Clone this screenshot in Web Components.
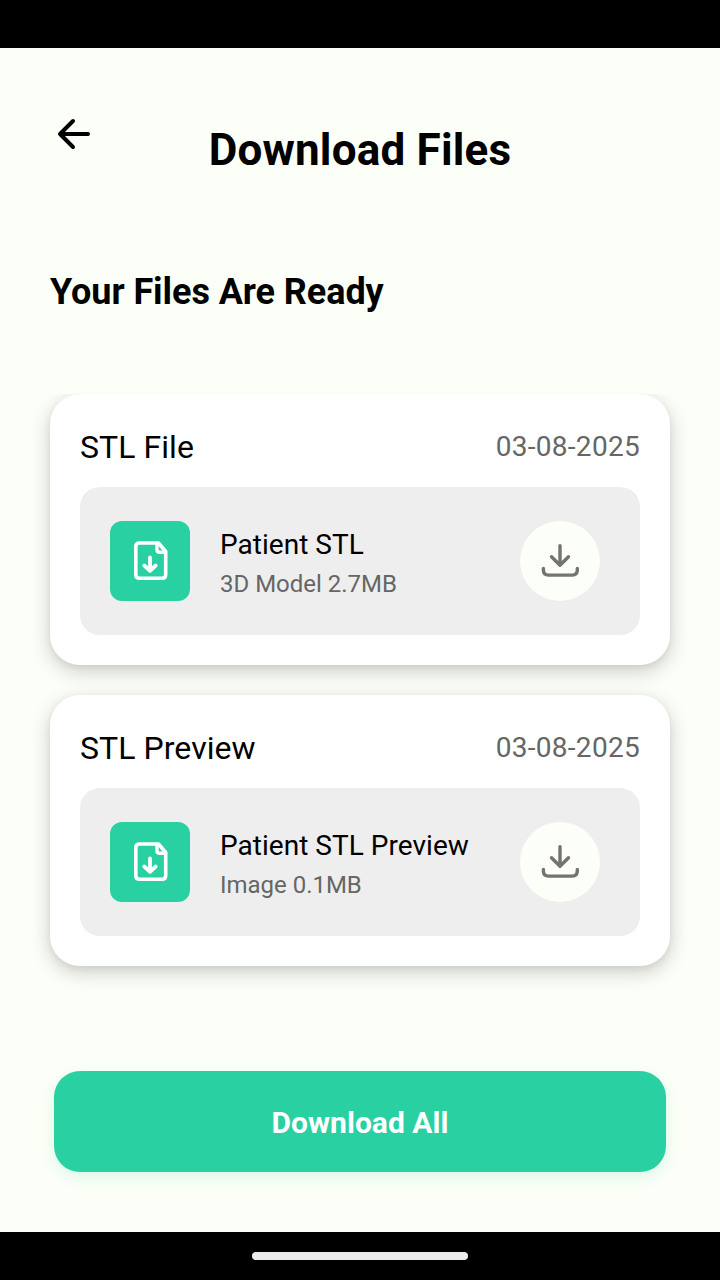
<!DOCTYPE html>
<html lang="en">
<head>
<meta charset="utf-8">
<title>Download Files</title>
<style>
html,body{margin:0;height:100%;background:#fcfff7;overflow:hidden}
body{font-family:Roboto,"Liberation Sans",sans-serif;color:#000}
</style>
</head>
<body>
<download-screen></download-screen>
<script>
const define = (name, html) => customElements.define(name, class extends HTMLElement {
  constructor() {
    super();
    const t = document.createElement('template');
    t.innerHTML = html;
    this.attachShadow({mode: 'open'}).append(t.content.cloneNode(true));
  }
});

define('file-badge', `
<style>
:host{display:flex;width:80px;height:80px;border-radius:12px;background:#29d0a2;flex:none}
svg{display:block;width:80px;height:80px}
</style>
<svg viewBox="0 0 80 80" fill="none" stroke="#fff" stroke-width="3.6" stroke-linecap="round" stroke-linejoin="round">
<path d="M48.500 22H29.500Q25.800 22 25.800 25.700V53.500Q25.800 57.200 29.500 57.200H52Q55.700 57.200 55.700 53.500V30.500Z"/>
<path d="M47 22.500V28.700Q47 31.300 49.600 31.300H55.300" stroke-width="3.400"/>
<path d="M40 36.500V49M34.300 44.500L40 49.800L45.700 44.500" stroke-width="3.800"/>
</svg>`);

define('download-button', `
<style>
:host{display:flex;width:80px;height:80px;border-radius:50%;background:#fcfff7;flex:none}
svg{display:block;width:80px;height:80px}
</style>
<svg viewBox="0 0 80 80" fill="none" stroke="#737373" stroke-width="3.4" stroke-linecap="round" stroke-linejoin="round">
<path d="M40 24.800V44M31.500 35.800L40 44.300L48.500 35.800"/>
<path d="M23.400 47.500V49Q23.400 54.100 28.500 54.100H52.200Q57.300 54.100 57.300 49V47.500"/>
</svg>`);

define('file-card', `
<style>
:host{display:block;box-sizing:border-box;height:271px;padding:30px;border-radius:30px;background:#fff;box-shadow:0 6px 20px rgba(0,0,0,.2),0 2px 6px rgba(0,0,0,.05)}
header{display:flex;justify-content:space-between;align-items:center;height:46px;margin-bottom:17px}
.heading{font-size:32px;line-height:46px;letter-spacing:.06px}
.date{font-size:28px;line-height:44px;color:#666;letter-spacing:.3px}
.row{box-sizing:border-box;display:flex;align-items:center;height:148px;padding:0 40px 0 30px;border-radius:20px;background:#eee}
.info{flex:1;margin-left:30px;padding-top:6px;display:flex;flex-direction:column;white-space:nowrap}
.name{font-size:28px;line-height:40px;letter-spacing:.03px}
.meta{font-size:24px;line-height:38px;color:#666;letter-spacing:-.02px}
</style>
<header><div class="heading"><slot name="heading"></slot></div><div class="date"><slot name="date"></slot></div></header>
<div class="row"><file-badge></file-badge>
<div class="info"><div class="name"><slot name="name"></slot></div><div class="meta"><slot name="meta"></slot></div></div>
<download-button></download-button></div>`);

define('primary-button', `
<style>
:host{display:flex;align-items:center;justify-content:center;box-sizing:border-box;height:101px;padding-top:2px;border-radius:26px;background:#29d0a2;color:#fff;font-size:30px;font-weight:700;letter-spacing:.03px;box-shadow:0 6px 16px rgba(41,208,162,.15)}
</style><span><slot></slot></span>`);

define('screen-header', `
<style>
:host{display:grid;grid-template-columns:70px 1fr 70px;height:60px;padding:0 40px}
svg{display:block;width:70px;height:60px;overflow:visible}
h1{margin:0;font-size:44px;line-height:60px;font-weight:700;text-align:center;white-space:nowrap;letter-spacing:.2px}
</style>
<svg viewBox="0 0 70 60" fill="none" stroke="#000" stroke-width="4" stroke-linecap="round" stroke-linejoin="round"><path d="M48 14H20M33 1L20 14L33 27"/></svg>
<h1><slot></slot></h1>`);

define('download-screen', `
<style>
:host{display:flex;flex-direction:column;width:720px;height:1280px;background:#fcfff7}
.status{height:48px;background:#000;flex:none}
screen-header{margin-top:72px;flex:none}
h2{margin:88px 50px 0;font-size:36px;line-height:48px;font-weight:700;letter-spacing:-.07px}
.list{margin-top:78px;height:647px;padding:0 50px;overflow:hidden;display:flex;flex-direction:column;gap:30px;flex:none}
primary-button{margin:30px 54px 60px;flex:none}
.nav{height:48px;background:#000;display:flex;align-items:center;justify-content:center;flex:none}
.nav i{width:216px;height:8px;border-radius:4px;background:#ebebeb}
</style>
<div class="status"></div>
<screen-header>Download Files</screen-header>
<h2>Your Files Are Ready</h2>
<div class="list">
<file-card><span slot="heading">STL File</span><span slot="date">03-08-2025</span><span slot="name">Patient STL</span><span slot="meta">3D Model 2.7MB</span></file-card>
<file-card><span slot="heading">STL Preview</span><span slot="date">03-08-2025</span><span slot="name">Patient STL Preview</span><span slot="meta">Image 0.1MB</span></file-card>
</div>
<primary-button>Download All</primary-button>
<div class="nav"><i></i></div>`);
</script>
</body>
</html>
